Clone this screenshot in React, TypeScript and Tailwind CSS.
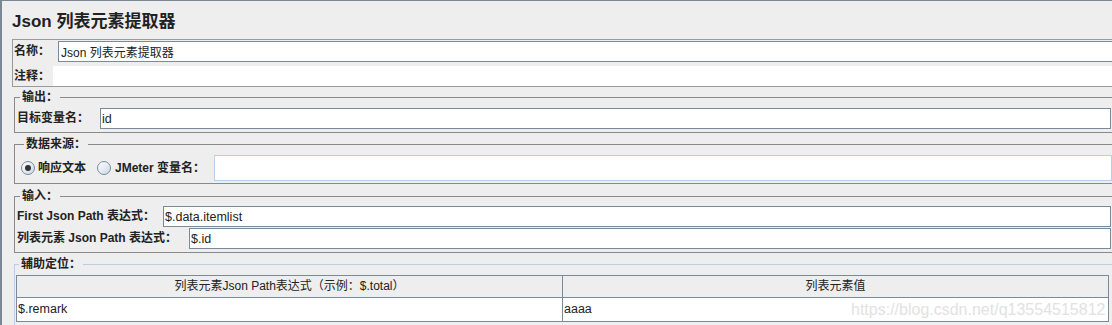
import React from "react";

const font = "font-['Liberation_Sans','Noto_Sans_CJK_SC',sans-serif]";

const Field: React.FC<{ value?: string; className?: string }> = ({ value = "", className = "" }) => (
  <input
    readOnly
    defaultValue={value}
    className={`h-[21px] border border-[#7a8a99] bg-white pl-[1px] text-[12.5px] leading-[19px] text-[#222] outline-none ${className}`}
  />
);

const Group: React.FC<{ title: string; blue?: boolean; className?: string; children: React.ReactNode }> = ({
  title,
  blue,
  className = "",
  children,
}) => (
  <fieldset
    className={`ml-[2px] mr-[-6px] border ${blue ? "border-[#b8cfe5]" : "border-[#8a8a8a]"} ${className}`}
  >
    <legend className="ml-[3px] px-[2px] text-[12px] font-bold leading-[14px] text-[#222]">{title}</legend>
    {children}
  </fieldset>
);

const Radio: React.FC<{ checked?: boolean }> = ({ checked }) => (
  <span className="flex h-[14px] w-[14px] shrink-0 items-center justify-center rounded-full border border-[#7a8a99] bg-gradient-to-br from-white to-[#c9d8e8]">
    {checked && <span className="h-[6px] w-[6px] rounded-full bg-[#333]" />}
  </span>
);

const App: React.FC = () => {
  return (
    <div className={`relative h-[325px] w-[1112px] overflow-hidden border-l-2 border-t border-[#7b8794] bg-[#eeeeee] ${font}`}>
      <div className="flex flex-col pl-[10px]">
        <h1 className="mt-[10px] text-[17px] font-bold leading-[22px] text-[#222]">Json 列表元素提取器</h1>

        {/* name / comment */}
        <div className="mr-[-10px] mt-[6px] flex flex-col border border-[#9a9a9a] pl-[1px]">
          <div className="flex h-[22px] items-start pt-[1px]">
            <span className="w-[44px] text-[12px] font-bold leading-[21px] text-[#222]">名称：</span>
            <Field value="Json 列表元素提取器" className="flex-1 pl-[2px] text-[12px]" />
          </div>
          <div className="mt-[4px] flex h-[20px] items-center">
            <span className="w-[39px] text-[12px] font-bold leading-[20px] text-[#222]">注释：</span>
            <div className="h-[20px] flex-1 bg-white" />
          </div>
        </div>

        <Group title="输出：" className="mt-[3px] pb-[3px] pl-[2px] pr-[6px] pt-[4px]">
          <div className="flex items-center">
            <span className="w-[83px] text-[12px] font-bold leading-[21px] text-[#222]">目标变量名：</span>
            <Field value="id" className="flex-1" />
          </div>
        </Group>

        <Group title="数据来源：" className="mt-[4px] pb-[2px] pl-[6px] pr-[5px] pt-[4px]">
          <div className="flex h-[26px] items-center">
            <Radio checked />
            <span className="ml-[3px] text-[12px] font-bold text-[#222]">响应文本</span>
            <span className="ml-[11px]">
              <Radio />
            </span>
            <span className="ml-[4px] w-[97px] text-[12px] font-bold text-[#222]">JMeter 变量名：</span>
            <div className="ml-[2px] h-[26px] flex-1 border border-[#b8cfe5] bg-white" />
          </div>
        </Group>

        <Group title="输入：" className="mt-[5px] pb-[3px] pl-[2px] pr-[6px] pt-[3px]">
          <div className="flex items-center">
            <span className="w-[146px] text-[12px] font-bold leading-[21px] text-[#222]">First Json Path 表达式：</span>
            <Field value="$.data.itemlist" className="flex-1" />
          </div>
          <div className="mt-[1px] flex items-center">
            <span className="w-[172px] text-[12px] font-bold leading-[21px] text-[#222]">列表元素 Json Path 表达式：</span>
            <Field value="$.id" className="flex-1" />
          </div>
        </Group>

        <Group title="辅助定位：" blue className="mt-[4px] h-[80px] pl-[1px] pt-[4px]">
          <div className="w-[1093px] border border-[#7a8a99] text-[12px] text-[#222]">
            <div className="grid grid-cols-[546px_1fr] border-b border-[#7a8a99] bg-[#eeeeee]">
              <div className="h-[21px] border-r border-[#7a8a99] text-center leading-[21px]">
                列表元素Json Path表达式（示例：$.total）
              </div>
              <div className="h-[21px] text-center leading-[21px]">列表元素值</div>
            </div>
            <div className="grid grid-cols-[546px_1fr] bg-white">
              <div className="h-[23px] border-r border-[#7a8a99] pl-[1px] text-[12.5px] leading-[23px]">$.remark</div>
              <div className="h-[23px] pl-[1px] text-[12.5px] leading-[23px]">aaaa</div>
            </div>
          </div>
        </Group>
      </div>

      <span className="pointer-events-none absolute left-[849px] top-[299px] font-['Liberation_Sans',sans-serif] text-[16px] leading-[20px] text-[#e2e2e2]">
        https://blog.csdn.net/q13554515812
      </span>
    </div>
  );
};

export default App;
